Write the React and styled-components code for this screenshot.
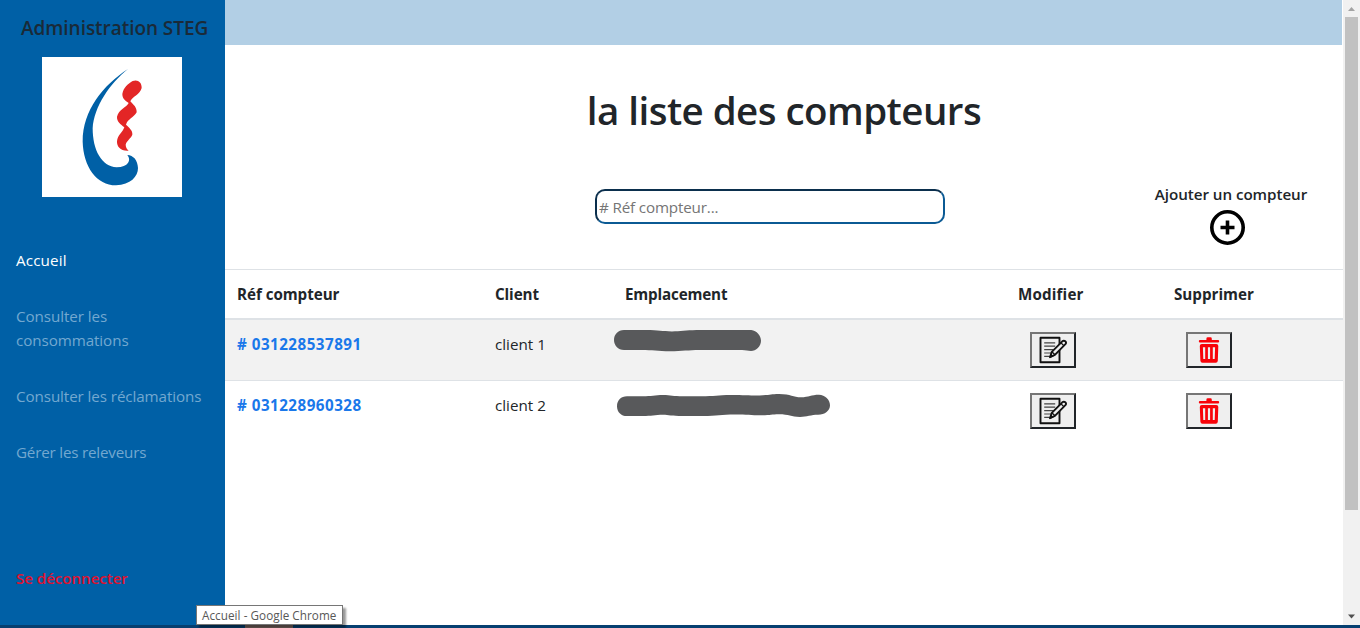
import React from "react";
import styled, { createGlobalStyle } from "styled-components";

const Global = createGlobalStyle`
  * { box-sizing: border-box; }
  body { margin: 0; overflow: hidden; background: #fff; }
  body, input, button {
    font-family: "Open Sans", "Noto Sans", sans-serif;
    font-size: 15.2px;
    line-height: 24px;
    color: #212529;
  }
`;

const Screen = styled.div`
  position: relative;
  display: flex;
  flex-direction: column;
  width: 1360px;
  height: 628px;
`;
const Page = styled.div`
  display: flex;
  height: 625px;
`;
const Sidebar = styled.aside`
  display: flex;
  flex-direction: column;
  width: 225px;
  background: #0060a6;
`;
const Brand = styled.h1`
  margin: 16px 0 0 21px;
  font-size: 19px;
  line-height: 24px;
  font-weight: 600;
  letter-spacing: -0.05px;
  white-space: nowrap;
  color: #1a2a38;
`;
const Logo = styled.svg`
  display: block;
  width: 140px;
  height: 140px;
  margin: 17px 0 0 42px;
  background: #fff;
`;
const Nav = styled.nav`
  display: flex;
  flex-direction: column;
  gap: 32px;
  margin: 51px 0 0 16px;
`;
const NavLink = styled.a`
  width: 195px;
  color: ${(p) => (p.$active ? "#fff" : "#73a8d0")};
  letter-spacing: ${(p) => p.$track || 0}px;
`;
const Logout = styled.a`
  margin: 102px 0 0 16px;
  font-weight: 600;
  letter-spacing: -0.08px;
  color: #e0122f;
`;

const Main = styled.main`
  display: flex;
  flex-direction: column;
  width: 1118px;
`;
const TopBar = styled.header`
  height: 45px;
  margin-right: 1px;
  background: #b2cfe5;
`;
const Title = styled.h2`
  margin: 41px 0 0;
  font-size: 38.5px;
  line-height: 48px;
  font-weight: 600;
  text-align: center;
  white-space: nowrap;
  letter-spacing: -0.54px;
`;
const Tools = styled.div`
  display: flex;
  justify-content: space-between;
  height: 86px;
  margin: 49px 36px 0 370px;
`;
const Search = styled.input`
  width: 350px;
  height: 35px;
  margin-top: 6px;
  padding: 1px 2px;
  border: 2px solid;
  border-color: #0b2f4d #0b5a94 #0b5a94 #0b2f4d;
  border-radius: 10px;
  background: #fff;
  letter-spacing: -0.15px;
  &::placeholder { color: #757575; opacity: 1; }
`;
const Add = styled.div`
  display: flex;
  flex-direction: column;
  align-items: center;
  width: 152px;
  margin-top: -1px;
  font-weight: 600;
  white-space: nowrap;
  letter-spacing: -0.05px;
  svg { display: block; margin-top: 4px; margin-right: 8px; }
`;

const Table = styled.div`
  display: flex;
  flex-direction: column;
`;
const Row = styled.div`
  display: grid;
  grid-template-columns: 258px 130px 393px 156px 181px;
  height: ${(p) => (p.$head ? 51 : p.$first ? 60 : 61)}px;
  padding: 12px 0 0;
  border-top: ${(p) => (p.$first ? 0 : 1)}px solid #dee2e6;
  border-bottom: ${(p) => (p.$head ? 2 : 0)}px solid #dee2e6;
  background: ${(p) => (p.$striped ? "#f2f2f2" : "#fff")};
  font-weight: ${(p) => (p.$head ? 700 : 400)};
`;
const Cell = styled.div`
  padding-left: 12px;
  white-space: nowrap;
  letter-spacing: ${(p) => p.$track || 0}px;
`;
const Ref = styled.a`
  color: #1a78ea;
  font-weight: 700;
  letter-spacing: 0.48px;
`;
const Redaction = styled.svg`
  display: block;
  margin: ${(p) => p.$margin};
  fill: #58595b;
`;
const IconButton = styled.button`
  display: flex;
  align-items: center;
  justify-content: center;
  width: 46px;
  height: 36px;
  margin-left: 12px;
  padding: 0;
  border: 2px solid;
  border-color: #767676 #212529 #212529 #767676;
  background: #efefef;
`;

const ScrollBar = styled.div`
  display: flex;
  flex-direction: column;
  align-items: center;
  width: 17px;
  background: #f1f1f1;
`;
const Arrow = styled.svg`
  display: block;
  width: 17px;
  height: 17px;
  fill: ${(p) => (p.$dim ? "#a3a3a3" : "#505050")};
`;
const Thumb = styled.div`
  width: 13px;
  height: 493px;
  margin-bottom: auto;
  background: #c1c1c1;
`;
const TaskStrip = styled.footer`
  height: 3px;
  padding-left: 245px;
  background: #063f70;
`;
const TaskItem = styled.div`
  width: 48px;
  height: 3px;
  background: #76645f;
`;
const Tooltip = styled.div`
  position: absolute;
  left: 196px;
  top: 605px;
  width: 147px;
  height: 20px;
  padding-left: 5px;
  border: 1px solid #767676;
  background: #fff;
  box-shadow: 3px 3px 2px rgba(0, 0, 0, 0.4);
  font-size: 11.7px;
  line-height: 18px;
  white-space: nowrap;
  letter-spacing: 0.05px;
  color: #575757;
`;

const StegLogo = () => (
  <Logo viewBox="126 171 420 420">
    <path
      fill="#0060a6"
      d="M384 207C310 255 248 330 248 425C250 500 290 556 348 556C392 554 414 530 414 504C413 480 400 466 382 465C395 480 385 502 350 502C305 500 278 450 278 385C282 320 330 250 384 207Z"
    />
    <path
      fill="#e32626"
      d="M398 243C412 237 426 246 425 264C420 284 396 290 391 304C400 314 411 322 410 337C402 352 382 358 378 374C390 385 398 392 397 404C392 416 380 422 377 434C377 443 382 448 386 452C362 454 350 440 351 424C353 404 368 398 373 382C362 372 350 365 351 350C356 328 380 322 386 309C375 302 367 295 367 282C370 262 385 251 398 243Z"
    />
  </Logo>
);

const PlusIcon = () => (
  <svg width="35" height="35" viewBox="0 0 35 35" fill="none" stroke="#000">
    <circle cx="17.5" cy="17.5" r="15.7" strokeWidth="3.6" />
    <path d="M17.5 10.5v14M10.5 17.5h14" strokeWidth="3.6" />
  </svg>
);

const EditIcon = () => (
  <svg width="30" height="30" viewBox="0 0 30 30" fill="none" stroke="#111" strokeLinejoin="round">
    <rect x="2.5" y="2.800" width="19" height="24.500" strokeWidth="1.9" />
    <path d="M6.200 7.800h11M6.200 11.200h11M6.200 14.600h9M6.200 18h7M6.200 21.400h5.500" strokeWidth="1.2" stroke="#444" />
    <path d="M12 22.200l1.800-5.400L24.300 6.300q1.600-1.200 3 0t.1 2.900L16.900 19.900z" fill="#efefef" strokeWidth="1.9" />
    <path d="M22.900 7.800l2.900 2.800M13.800 16.800l3.200 3" strokeWidth="1.300" />
    <path d="M11.800 22.400l1.100-3.300 2.200 2.200z" fill="#111" strokeWidth="0.8" />
  </svg>
);

const TrashIcon = () => (
  <svg width="30" height="30" viewBox="0 0 30 30" fill="#f80309">
    <path d="M6 4.900h6.400V3.700q0-1.400 1.400-1.400h2.600q1.400 0 1.400 1.400v1.200H24q1.200 0 1.200 1.300T24 7.500H6q-1.200 0-1.200-1.300T6 4.900z" />
    <path
      fillRule="evenodd"
      d="M7.900 9h14.300q2.200 0 2.100 2L23.800 25.700q-.2 2.100-2 2.100H8.400q-1.800 0-2-2.100L5.800 11q-.1-2 2.100-2zM8.900 12.200l.4 11.800h1.900V12.200zM13.900 12.200v11.800h2.200V12.200zM18.800 12.200v11.800h1.900l.4-11.800z"
    />
  </svg>
);

const rows = [
  {
    id: "031228537891",
    client: "client 1",
    redaction: (
      <Redaction $margin="-2px 0 0 -11px" width="147" height="22" viewBox="0 0 147 22">
        <path d="M10 0.100H32C45 .1 48 1.400 58 1.400S75 -.2 90 -.1H136C142 0 147 5 147 10.800S142 21 137 21C134 21 132 20 128 20H85C75 20 68 21.200 56 21.200S38 20 28 20H10C4 20 0 15.600 0 10.100S4 .1 10 .1Z" />
      </Redaction>
    ),
  },
  {
    id: "031228960328",
    client: "client 2",
    redaction: (
      <Redaction $margin="1px 0 0 -8px" width="213" height="24" viewBox="0 0 213 24">
        <path d="M10 2.300H26C34 2.300 38 1 46 1S56 2.300 66 2.300H84C98 2.300 100 1 114 1C130 1 136 1.800 146 1.300C154 .8 154 0 162 0C174 0 176 3.300 184 3.300C192 3.300 194 .8 202 .8C208 .8 213 6 213 11.300S208 20.800 201 20.800C194 20.800 190 23 183 23C174 23 172 20.300 162 20.300C154 20.300 154 21.300 144 21.300C134 21.300 130 20.500 118 20.500C104 20.500 100 22.100 86 22.100H66C54 22.100 52 20.800 46 20.800C38 20.800 34 22.100 26 22.100H10C4 22.100 0 18 0 12.200S4 2.300 10 2.300Z" />
      </Redaction>
    ),
  },
];

export default function App() {
  return (
    <Screen>
      <Global />
      <Page>
        <Sidebar>
          <Brand>Administration STEG</Brand>
          <StegLogo />
          <Nav>
            <NavLink $active $track={0.15}>Accueil</NavLink>
            <NavLink $track={-0.08}>Consulter les consommations</NavLink>
            <NavLink $track={-0.09}>Consulter les réclamations</NavLink>
            <NavLink $track={-0.2}>Gérer les releveurs</NavLink>
          </Nav>
          <Logout>Se déconnecter</Logout>
        </Sidebar>
        <Main>
          <TopBar />
          <Title>la liste des compteurs</Title>
          <Tools>
            <Search placeholder="# Réf compteur..." />
            <Add>
              Ajouter un compteur
              <PlusIcon />
            </Add>
          </Tools>
          <Table>
            <Row $head>
              <Cell $track={-0.05}>Réf compteur</Cell>
              <Cell $track={-0.1}>Client</Cell>
              <Cell $track={-0.16}>Emplacement</Cell>
              <Cell $track={0.15}>Modifier</Cell>
              <Cell>Supprimer</Cell>
            </Row>
            {rows.map((row, i) => (
              <Row key={row.id} $first={i === 0} $striped={i % 2 === 0}>
                <Cell><Ref># {row.id}</Ref></Cell>
                <Cell>{row.client}</Cell>
                <Cell>{row.redaction}</Cell>
                <Cell><IconButton aria-label="Modifier"><EditIcon /></IconButton></Cell>
                <Cell><IconButton aria-label="Supprimer"><TrashIcon /></IconButton></Cell>
              </Row>
            ))}
          </Table>
        </Main>
        <ScrollBar>
          <Arrow $dim viewBox="0 0 17 17"><path d="M5 11L8.500 7L12 11Z" /></Arrow>
          <Thumb />
          <Arrow viewBox="0 0 17 17"><path d="M5 6.500H12L8.500 10.500Z" /></Arrow>
        </ScrollBar>
      </Page>
      <TaskStrip><TaskItem /></TaskStrip>
      <Tooltip>Accueil - Google Chrome</Tooltip>
    </Screen>
  );
}
